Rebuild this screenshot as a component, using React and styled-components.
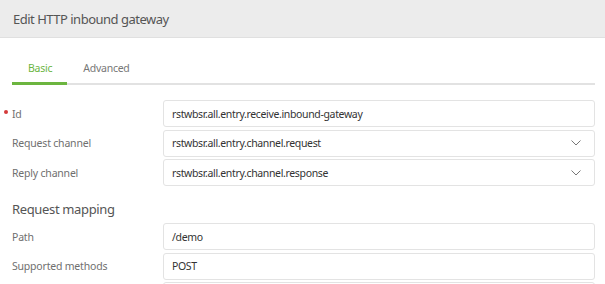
import React from "react";
import styled, { createGlobalStyle } from "styled-components";

const Global = createGlobalStyle`
  html, body { margin: 0; padding: 0; background: #fff; }
  body { font-family: "Noto Sans", "Open Sans", sans-serif; }
  * { box-sizing: border-box; }
`;

const Page = styled.div`
  width: 605px;
  height: 284px;
  overflow: hidden;
  background: #fff;
`;

const Header = styled.div`
  height: 38px;
  background: #ececec;
  border-bottom: 1px solid #e0e0e0;
  padding-left: 13px;
  display: flex;
  align-items: center;
`;

const Title = styled.h1`
  margin: 0;
  font-size: 13px;
  font-weight: 400;
  color: #555;
  letter-spacing: -0.5px;
`;

const Body = styled.div`
  padding: 0 10px 0 12px;
`;

const TabBar = styled.div`
  margin-top: 19px;
  display: flex;
  border-bottom: 2px solid #e2e2e2;
`;

const Tab = styled.div`
  padding: 0 15px 4px 16px;
  height: 26px;
  display: flex;
  align-items: center;
  font-size: 10.5px;
  letter-spacing: -0.25px;
  color: ${(p) => (p.$active ? "#6cb53f" : "#777")};
  position: relative;
  &::after {
    content: "";
    display: ${(p) => (p.$active ? "block" : "none")};
    position: absolute;
    left: 0;
    right: 0;
    bottom: -2px;
    height: 3px;
    background: #6cb53f;
  }
`;

const Form = styled.div`
  margin-top: 15px;
  display: grid;
  grid-template-columns: 151px 1fr;
  row-gap: 2.5px;
`;

const Label = styled.div`
  font-size: 10.5px;
  letter-spacing: -0.2px;
  color: #6f6f6f;
  display: flex;
  align-items: center;
  position: relative;
`;

const Required = styled.span`
  position: absolute;
  left: -8px;
  top: 50%;
  width: 4px;
  height: 4px;
  margin-top: -4px;
  border-radius: 50%;
  background: #d43a3a;
`;

const Field = styled.div`
  height: 27px;
  border: 1px solid #e3e3e3;
  border-radius: 3px;
  display: flex;
  align-items: center;
  justify-content: space-between;
  padding: 0 13px 0 8px;
  font-size: 10.5px;
  letter-spacing: -0.35px;
  color: #333;
  background: #fff;
`;

const Section = styled.div`
  grid-column: 1 / -1;
  font-size: 13px;
  letter-spacing: -0.35px;
  line-height: 20px;
  color: #555;
  padding: 10px 0 2px;
`;

const Chevron = () => (
  <svg width="10" height="6" viewBox="0 0 10 6">
    <path d="M0.5 0.5 L5 5 L9.5 0.5" fill="none" stroke="#777" strokeWidth="1" />
  </svg>
);

const rows = [
  { label: "Id", value: "rstwbsr.all.entry.receive.inbound-gateway", required: true },
  { label: "Request channel", value: "rstwbsr.all.entry.channel.request", select: true },
  { label: "Reply channel", value: "rstwbsr.all.entry.channel.response", select: true },
];

const rows2 = [
  { label: "Path", value: "/demo" },
  { label: "Supported methods", value: "POST" },
  { label: "", value: "" },
];

const Row = ({ label, value, required, select }) => (
  <>
    <Label>
      {required && <Required />}
      {label}
    </Label>
    <Field>
      <span>{value}</span>
      {select && <Chevron />}
    </Field>
  </>
);

export default function App() {
  return (
    <Page>
      <Global />
      <Header>
        <Title>Edit HTTP inbound gateway</Title>
      </Header>
      <Body>
        <TabBar>
          <Tab $active>Basic</Tab>
          <Tab>Advanced</Tab>
        </TabBar>
        <Form>
          {rows.map((r) => (
            <Row key={r.label} {...r} />
          ))}
          <Section>Request mapping</Section>
          {rows2.map((r, i) => (
            <Row key={i} {...r} />
          ))}
        </Form>
      </Body>
    </Page>
  );
}
